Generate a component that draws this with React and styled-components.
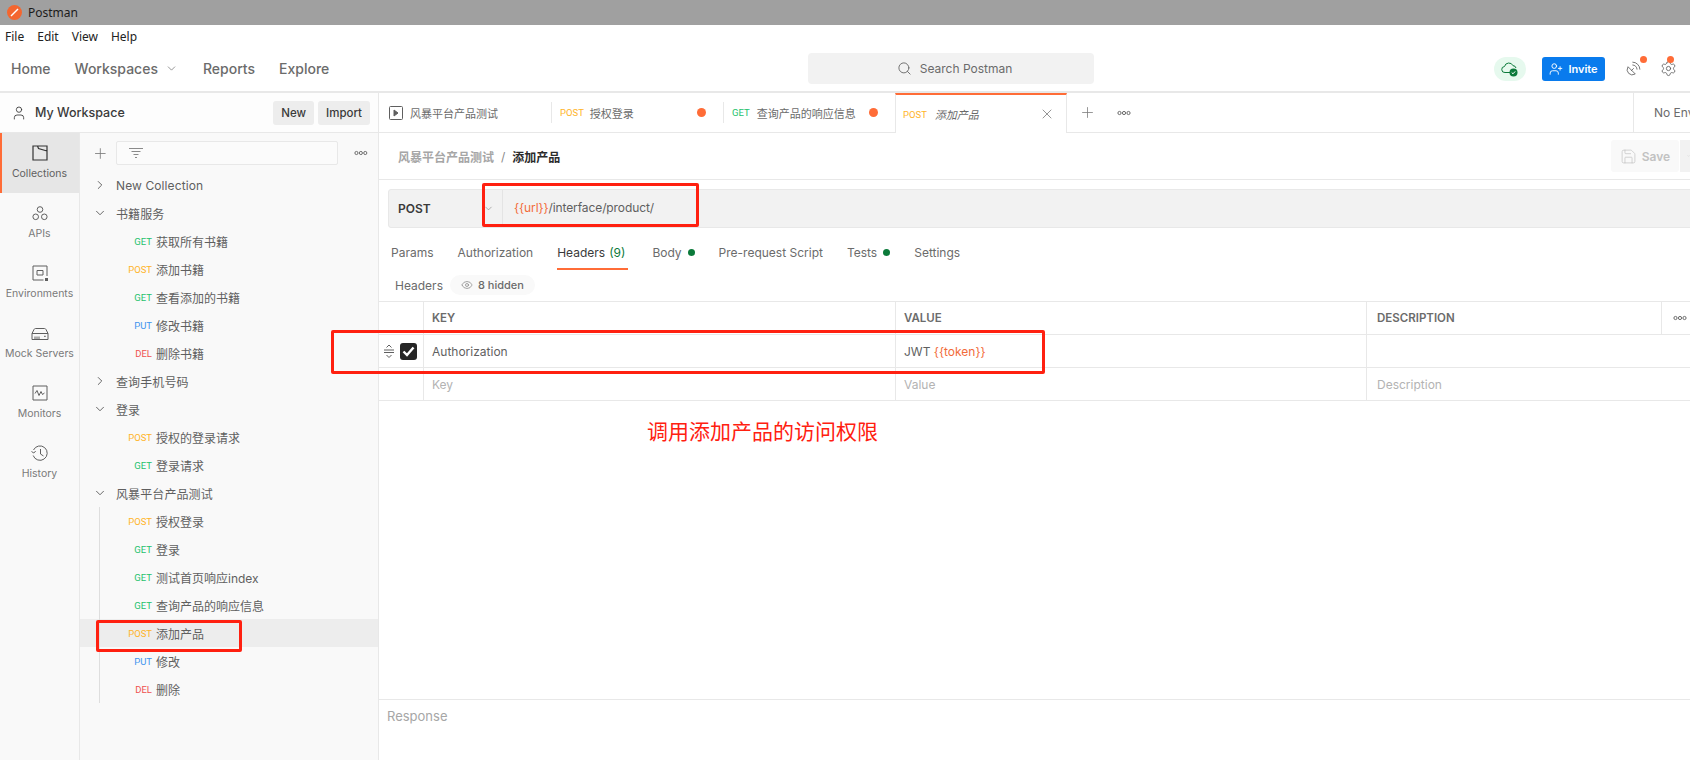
import React from "react";
import styled, { createGlobalStyle } from "styled-components";
import { ChevronDown, ChevronRight, Plus, X, Search, Eye, User, UserPlus, Settings, SatelliteDish, Save } from "lucide-react";

const GlobalStyle = createGlobalStyle`
  html, body { margin: 0; padding: 0; background: #fff; }
  * { box-sizing: border-box; }
  body {
    font-family: Inter, "Noto Sans CJK SC", sans-serif;
    font-size: 12px;
    color: #3a3a3a;
    overflow: hidden;
  }
`;

const methodColors = { GET: "#26c26d", POST: "#ffb428", PUT: "#3f94ee", DEL: "#ef5050" };

const tree = [
  { name: "New Collection" },
  {
    name: "书籍服务",
    open: true,
    items: [
      ["GET", "获取所有书籍"],
      ["POST", "添加书籍"],
      ["GET", "查看添加的书籍"],
      ["PUT", "修改书籍"],
      ["DEL", "删除书籍"],
    ],
  },
  { name: "查询手机号码" },
  {
    name: "登录",
    open: true,
    items: [
      ["POST", "授权的登录请求"],
      ["GET", "登录请求"],
    ],
  },
  {
    name: "风暴平台产品测试",
    open: true,
    guide: true,
    items: [
      ["POST", "授权登录"],
      ["GET", "登录"],
      ["GET", "测试首页响应index"],
      ["GET", "查询产品的响应信息"],
      ["POST", "添加产品", true],
      ["PUT", "修改"],
      ["DEL", "删除"],
    ],
  },
];

const MoreDots = () => (
  <svg width="14" height="6" viewBox="0 0 14 6" fill="none" stroke="#6b6b6b" strokeWidth="1">
    <circle cx="2.5" cy="3" r="1.6" />
    <circle cx="7" cy="3" r="1.6" />
    <circle cx="11.5" cy="3" r="1.6" />
  </svg>
);

const railItems = [
  {
    label: "Collections",
    icon: <path d="M4 4h14v14H4zM8.500 4l1 2.500L18 9" stroke="#333" strokeWidth="1.200" />,
  },
  {
    label: "APIs",
    icon: (
      <>
        <circle cx="11" cy="7.500" r="2.800" />
        <circle cx="6.700" cy="14.800" r="2.800" />
        <circle cx="15.300" cy="14.800" r="2.800" />
      </>
    ),
  },
  {
    label: "Environments",
    icon: (
      <>
        <path d="M18 14V4H4v14h10.500M8 8.500h6v4.500H8z" />
        <rect x="16" y="16" width="3" height="3" fill="#5f5f5f" stroke="none" />
      </>
    ),
  },
  {
    label: "Mock Servers",
    icon: <path d="M3 11.500V17.500h16v-6l-2-4q-.5-1-1.500-1h-9q-1 0-1.500 1zM3 11.500h16M6 14.500v3M8 14.500v3M10 14.500v3M15 14.300h1.800" />,
  },
  {
    label: "Monitors",
    icon: <path d="M4 4h14v14H4zM6 11.500l2-3 2 5 2-4 1.500 3 2-1.500" />,
  },
  {
    label: "History",
    icon: <path d="M4.500 8a7.200 7.200 0 1 1-.3 5.500M2.500 9.500l2.300 1.500 1.900-2M11.500 7v5l3 2" />,
  },
];

const App = () => {
  return (
    <Page>
      <GlobalStyle />
      <TitleBar>
        <Logo>
          <svg width="9" height="9" viewBox="0 0 9 9" fill="none" stroke="#fff" strokeWidth="1.500">
            <path d="M1 8l7-7" />
          </svg>
        </Logo>
        Postman
      </TitleBar>
      <MenuBar>
        <span>File</span>
        <span>Edit</span>
        <span>View</span>
        <span>Help</span>
      </MenuBar>
      <NavBar>
        <NavLeft>
          <NavLink>Home</NavLink>
          <NavLink>
            Workspaces <ChevronDown size={13} strokeWidth={1.3} />
          </NavLink>
          <NavLink>Reports</NavLink>
          <NavLink>Explore</NavLink>
        </NavLeft>
        <SearchBox>
          <Search size={15} strokeWidth={1.5} color="#6b6b6b" />
          Search Postman
        </SearchBox>
        <NavRight>
          <CloudPill>
            <svg width="18" height="16" viewBox="0 0 18 16" fill="none">
              <path d="M10 11.500H4a3 3 0 0 1-.5-6 4.500 4.500 0 0 1 8.500-.8 3 3 0 0 1 3 2.300" stroke="#0b7a3a" strokeWidth="1" />
              <circle cx="12.500" cy="11.500" r="4" fill="#0b7a3a" />
              <path d="M10.700 11.500l1.300 1.300 2.200-2.400" stroke="#fff" strokeWidth="1" />
            </svg>
          </CloudPill>
          <InviteButton>
            <UserPlus size={14} strokeWidth={1.6} />
            Invite
          </InviteButton>
          <IconBadge $gap="20px">
            <SatelliteDish size={17} strokeWidth={1.2} color="#5f5f5f" />
            <BadgeDot $right="-5px" />
          </IconBadge>
          <IconBadge $gap="18px">
            <Settings size={17} strokeWidth={1.2} color="#5f5f5f" />
            <BadgeDot $right="3px" />
          </IconBadge>
        </NavRight>
      </NavBar>
      <Body>
        <Sidebar>
          <WorkspaceBar>
            <User size={16} strokeWidth={1.3} color="#3a3a3a" />
            <WorkspaceName>My Workspace</WorkspaceName>
            <SmallButton>New</SmallButton>
            <SmallButton>Import</SmallButton>
          </WorkspaceBar>
          <SidebarBody>
            <Rail>
              {railItems.map((item) => (
                <RailItem key={item.label} $active={item.label === "Collections"}>
                  <svg width="22" height="22" viewBox="0 0 22 22" fill="none" stroke="#5f5f5f" strokeWidth="1">
                    {item.icon}
                  </svg>
                  <span>{item.label}</span>
                </RailItem>
              ))}
            </Rail>
            <TreePanel>
              <TreeTools>
                <Plus size={17} strokeWidth={1.2} color="#7a7a7a" />
                <FilterInput>
                  <svg width="16" height="12" viewBox="0 0 16 12" fill="none" stroke="#8a8a8a" strokeWidth="1">
                    <path d="M1 1.500h14M3.500 4.500h9M5.500 7.500h5M7 10.500h2" />
                  </svg>
                </FilterInput>
                <MoreDots />
              </TreeTools>
              {tree.map((folder) => (
                <div key={folder.name}>
                  <FolderRow>
                    {folder.open ? (
                      <ChevronDown size={14} strokeWidth={1.3} />
                    ) : (
                      <ChevronRight size={14} strokeWidth={1.3} />
                    )}
                    <span>{folder.name}</span>
                  </FolderRow>
                  {folder.items && (
                    <Children $guide={folder.guide}>
                      {folder.items.map(([type, name, selected]) => (
                        <RequestRow key={name} $selected={selected}>
                          <MethodLabel $type={type}>{type}</MethodLabel>
                          <span>{name}</span>
                        </RequestRow>
                      ))}
                    </Children>
                  )}
                </div>
              ))}
            </TreePanel>
          </SidebarBody>
        </Sidebar>
        <Main>
          <TabStrip>
            <Tab>
              <svg width="14" height="14" viewBox="0 0 14 14" fill="none" stroke="#5f5f5f" strokeWidth="1">
                <rect x="0.500" y="0.500" width="13" height="13" rx="1" />
                <path d="M5 4l4 3-4 3z" fill="#5f5f5f" />
              </svg>
              <TabLabel>风暴平台产品测试</TabLabel>
            </Tab>
            <Tab $sep>
              <MethodLabel $type="POST">POST</MethodLabel>
              <TabLabel $gap="6px">授权登录</TabLabel>
              <UnsavedDot />
            </Tab>
            <Tab $sep>
              <MethodLabel $type="GET">GET</MethodLabel>
              <TabLabel>查询产品的响应信息</TabLabel>
              <UnsavedDot />
            </Tab>
            <Tab $active>
              <MethodLabel $type="POST">POST</MethodLabel>
              <TabLabel $gap="8px" $italic>添加产品</TabLabel>
              <TabClose>
                <X size={16} strokeWidth={1} color="#5f5f5f" />
              </TabClose>
            </Tab>
            <TabTool>
              <Plus size={17} strokeWidth={1.1} color="#7a7a7a" />
              <MoreDots />
            </TabTool>
            <EnvCell>No Environment</EnvCell>
          </TabStrip>
          <Crumbs>
            <CrumbParent>风暴平台产品测试</CrumbParent>
            <CrumbSlash>/</CrumbSlash>
            <CrumbCurrent>添加产品</CrumbCurrent>
            <SaveGroup>
              <SaveButton>
                <Save size={17} strokeWidth={1} />
                Save
              </SaveButton>
              <SaveArrow>
                <ChevronDown size={12} strokeWidth={1.3} />
              </SaveArrow>
            </SaveGroup>
          </Crumbs>
          <UrlSection>
            <UrlBar>
              <MethodSelect>
                POST
                <ChevronDown size={11} strokeWidth={1} color="#5f5f5f" />
              </MethodSelect>
              <UrlText>
                <Variable>{"{{url}}"}</Variable>/interface/product/
              </UrlText>
            </UrlBar>
          </UrlSection>
          <RequestTabs>
            <RequestTab>Params</RequestTab>
            <RequestTab>Authorization</RequestTab>
            <RequestTab $active>
              Headers <Count>(9)</Count>
            </RequestTab>
            <RequestTab>
              Body <GreenDot />
            </RequestTab>
            <RequestTab>Pre-request Script</RequestTab>
            <RequestTab>
              Tests <GreenDot />
            </RequestTab>
            <RequestTab>Settings</RequestTab>
          </RequestTabs>
          <HeadersRow>
            <span>Headers</span>
            <HiddenPill>
              <Eye size={12} strokeWidth={1.500} color="#8a8a8a" />8 hidden
            </HiddenPill>
          </HeadersRow>
          <Table>
            <TableRow>
              <DragCell />
              <HeadCell>KEY</HeadCell>
              <HeadCell>VALUE</HeadCell>
              <HeadCell>DESCRIPTION</HeadCell>
              <EndCell>
                <MoreDots />
              </EndCell>
            </TableRow>
            <TableRow>
              <DragCell>
                <svg width="12" height="14" viewBox="0 0 12 14" fill="none" stroke="#5f5f5f" strokeWidth="1">
                  <path d="M1 6h10M1 8.500h10M3.500 3.500L6 1l2.500 2.500M3.500 11L6 13.500 8.500 11" />
                </svg>
                <Checkbox>
                  <svg width="13" height="11" viewBox="0 0 13 11" fill="none" stroke="#fff" strokeWidth="2.400">
                    <path d="M1.500 5.500l3.500 3.500 6.500-7.500" />
                  </svg>
                </Checkbox>
              </DragCell>
              <Cell>Authorization</Cell>
              <Cell>
                JWT&nbsp;<Variable>{"{{token}}"}</Variable>
              </Cell>
              <Cell />
              <EndCell />
            </TableRow>
            <TableRow>
              <DragCell />
              <Cell $muted>Key</Cell>
              <Cell $muted>Value</Cell>
              <Cell $muted>Description</Cell>
              <EndCell />
            </TableRow>
          </Table>
          <Spacer />
          <ResponseBar>Response</ResponseBar>
        </Main>
      </Body>
      <Annotation $left="482px" $top="183px" $width="217px" $height="44px" />
      <Annotation $left="331px" $top="330px" $width="714px" $height="44px" />
      <Annotation $left="96px" $top="620px" $width="146px" $height="32px" />
      <AnnotationText>调用添加产品的访问权限</AnnotationText>
    </Page>
  );
};

const Page = styled.div`
  position: relative;
  width: 1690px;
  height: 760px;
  overflow: hidden;
  display: flex;
  flex-direction: column;
  background: #fff;
`;

const TitleBar = styled.div`
  height: 25px;
  flex: none;
  background: #a0a0a0;
  color: #1c1c1c;
  font-family: "Noto Sans", sans-serif;
  font-size: 12px;
  display: flex;
  align-items: center;
  gap: 6px;
  padding-left: 7px;
`;

const Logo = styled.div`
  width: 15px;
  height: 15px;
  border-radius: 50%;
  background: #f4662f;
  display: flex;
  align-items: center;
  justify-content: center;
`;

const MenuBar = styled.div`
  height: 22px;
  flex: none;
  display: flex;
  align-items: center;
  gap: 13px;
  padding-left: 5px;
  font-family: "Noto Sans", sans-serif;
  font-size: 12px;
  color: #222;
`;

const NavBar = styled.div`
  height: 46px;
  flex: none;
  display: grid;
  grid-template-columns: 808px 286px 1fr;
  align-items: center;
  padding-bottom: 1px;
  border-bottom: 2px solid #e8e8e8;
`;

const NavLeft = styled.div`
  display: flex;
  align-items: center;
  gap: 22px;
  padding-left: 11px;
`;

const NavLink = styled.div`
  display: flex;
  align-items: center;
  gap: 7px;
  font-size: 14px;
  font-weight: 500;
  color: #6b6b6b;
  &:nth-child(1) { margin-right: 2px; }
  &:nth-child(2) { margin-right: 3px; }
  &:nth-child(3) { margin-right: 2px; }
`;

const SearchBox = styled.div`
  height: 31px;
  background: #f2f2f2;
  border-radius: 4px;
  display: flex;
  align-items: center;
  justify-content: center;
  padding-left: 7px;
  gap: 8px;
  color: #6b6b6b;
  font-size: 12px;
`;

const NavRight = styled.div`
  display: flex;
  align-items: center;
  justify-content: flex-end;
  padding-right: 13px;
`;

const CloudPill = styled.div`
  width: 32px;
  height: 24px;
  border-radius: 12px;
  background: #e6f9ee;
  display: flex;
  align-items: center;
  justify-content: center;
  margin-right: 16px;
`;

const InviteButton = styled.div`
  width: 63px;
  height: 24px;
  border-radius: 3px;
  background: #097bed;
  color: #fff;
  font-weight: 600;
  font-size: 11px;
  display: flex;
  align-items: center;
  justify-content: center;
  gap: 5px;
`;

const IconBadge = styled.div`
  position: relative;
  display: flex;
  margin-left: ${(p) => p.$gap};
`;

const BadgeDot = styled.span`
  position: absolute;
  top: -4px;
  right: ${(p) => p.$right};
  width: 7px;
  height: 7px;
  border-radius: 50%;
  background: #ff6c37;
`;

const Body = styled.div`
  flex: 1;
  display: flex;
  min-height: 0;
`;

const Sidebar = styled.div`
  width: 379px;
  flex: none;
  display: flex;
  flex-direction: column;
  border-right: 1px solid #e8e8e8;
`;

const WorkspaceBar = styled.div`
  height: 40px;
  flex: none;
  display: flex;
  align-items: center;
  padding: 0 8px 0 11px;
  gap: 4px;
  border-bottom: 1px solid #e8e8e8;
  background: #fdfdfd;
`;

const WorkspaceName = styled.div`
  flex: 1;
  margin-left: 4px;
  font-size: 12.500px;
  font-weight: 500;
  color: #3a3a3a;
`;

const SmallButton = styled.div`
  height: 24px;
  padding: 0 8px;
  border-radius: 3px;
  background: #ededed;
  font-size: 11.500px;
  font-weight: 500;
  color: #3a3a3a;
  display: flex;
  align-items: center;
`;

const SidebarBody = styled.div`
  flex: 1;
  display: flex;
  min-height: 0;
`;

const Rail = styled.div`
  width: 80px;
  flex: none;
  background: #f9f9f9;
  border-right: 1px solid #e8e8e8;
`;

const RailItem = styled.div`
  height: 60px;
  display: flex;
  flex-direction: column;
  align-items: center;
  padding: 9px 2px 0 0;
  gap: 3px;
  font-size: 10.500px;
  color: ${(p) => (p.$active ? "#5f5f5f" : "#7a7a7a")};
  background: ${(p) => (p.$active ? "#e6e6e6" : "transparent")};
  border-left: 2px solid ${(p) => (p.$active ? "#ff6c37" : "transparent")};
`;

const TreePanel = styled.div`
  flex: 1;
  min-width: 0;
  background: #f9f9f9;
`;

const TreeTools = styled.div`
  height: 40px;
  margin-bottom: -2px;
  display: flex;
  align-items: center;
  padding: 0 10px 0 12px;
  gap: 7px;
`;

const FilterInput = styled.div`
  width: 227px;
  height: 24px;
  background: #fbfbfb;
  border: 1px solid #e8e8e8;
  border-radius: 2px;
  display: flex;
  align-items: center;
  padding-left: 11px;
  margin-right: 9px;
`;

const FolderRow = styled.div`
  height: 28px;
  display: flex;
  align-items: center;
  padding-left: 13px;
  gap: 9px;
  color: #5f5f5f;
  font-size: 12px;
  letter-spacing: 0.1px;
  svg { color: #3a3a3a; flex: none; }
`;

const Children = styled.div`
  position: relative;
  ${(p) =>
    p.$guide &&
    `&::before {
      content: "";
      position: absolute;
      left: 19px;
      top: 0;
      bottom: 0;
      width: 1px;
      background: #dedede;
      z-index: 1;
    }`}
`;

const RequestRow = styled.div`
  height: 28px;
  display: grid;
  grid-template-columns: 72px 1fr;
  column-gap: 4px;
  align-items: center;
  background: ${(p) => (p.$selected ? "#ededed" : "transparent")};
  color: #5f5f5f;
  font-size: 12px;
`;

const MethodLabel = styled.span`
  font-family: Roboto, sans-serif;
  font-size: 9.500px;
  color: ${(p) => methodColors[p.$type]};
  text-align: right;
`;

const Main = styled.div`
  flex: 1;
  min-width: 0;
  display: flex;
  flex-direction: column;
`;

const TabStrip = styled.div`
  height: 40px;
  flex: none;
  display: flex;
  border-bottom: 1px solid #e8e8e8;
`;

const Tab = styled.div`
  position: relative;
  width: 172px;
  flex: none;
  height: ${(p) => (p.$active ? "40px" : "39px")};
  display: flex;
  align-items: center;
  padding-left: ${(p) => (p.$active ? "7px" : p.$sep ? "9px" : "10px")};
  background: #fff;
  border-top: ${(p) => (p.$active ? "2px solid #ff6c37" : "none")};
  border-right: ${(p) => (p.$active ? "1px solid #e8e8e8" : "none")};
  border-left: ${(p) => (p.$active ? "1px solid #e8e8e8" : "none")};
  color: #5f5f5f;
  ${(p) =>
    p.$sep &&
    `&::before {
      content: "";
      position: absolute;
      left: 0;
      top: 9px;
      height: 21px;
      width: 1px;
      background: #e8e8e8;
    }`}
`;

const TabLabel = styled.span`
  margin-left: ${(p) => p.$gap || "7px"};
  font-size: 11px;
  font-style: ${(p) => (p.$italic ? "italic" : "normal")};
  color: #6b6b6b;
`;

const UnsavedDot = styled.span`
  position: absolute;
  right: 17px;
  top: 15px;
  width: 9px;
  height: 9px;
  border-radius: 50%;
  background: #ff6c37;
`;

const TabClose = styled.span`
  margin-left: auto;
  margin-right: 11px;
  display: flex;
`;

const TabTool = styled.div`
  display: flex;
  align-items: center;
  gap: 21px;
  padding-left: 12px;
  flex: 1;
`;

const EnvCell = styled.div`
  width: 57px;
  flex: none;
  border-left: 1px solid #e8e8e8;
  padding-left: 20px;
  display: flex;
  align-items: center;
  white-space: nowrap;
  overflow: hidden;
  color: #6b6b6b;
`;

const Crumbs = styled.div`
  height: 47px;
  flex: none;
  display: flex;
  align-items: center;
  padding-left: 19px;
  border-bottom: 1px solid #e8e8e8;
`;

const CrumbParent = styled.span`
  font-weight: 600;
  color: #a6a6a6;
`;

const CrumbSlash = styled.span`
  margin: 0 7px;
  color: #8a8a8a;
`;

const CrumbCurrent = styled.span`
  font-weight: 600;
  color: #2b2b2b;
`;

const SaveGroup = styled.div`
  margin-left: auto;
  display: flex;
  gap: 1px;
`;

const SaveButton = styled.div`
  width: 68px;
  height: 32px;
  border-radius: 3px;
  background: #f9f9f9;
  color: #c2c2c2;
  font-weight: 600;
  display: flex;
  align-items: center;
  justify-content: center;
  gap: 5px;
`;

const SaveArrow = styled.div`
  width: 10px;
  height: 32px;
  background: #f2f2f2;
  color: #8a8a8a;
  display: flex;
  align-items: center;
  overflow: hidden;
  padding-left: 7px;
`;

const UrlSection = styled.div`
  height: 48px;
  flex: none;
  padding: 9px 0 0 9px;
`;

const UrlBar = styled.div`
  height: 39px;
  margin-right: -4px;
  display: flex;
  background: #f2f2f2;
  border: 1px solid #e8e8e8;
  border-radius: 3px;
`;

const MethodSelect = styled.div`
  width: 114px;
  flex: none;
  display: flex;
  align-items: center;
  justify-content: space-between;
  padding: 0 8px 0 9px;
  border-right: 1px solid #e4e4e4;
  font-size: 12px;
  font-weight: 600;
  color: #3a3a3a;
`;

const UrlText = styled.div`
  flex: 1;
  padding-left: 11px;
  padding-bottom: 2px;
  display: flex;
  align-items: center;
  color: #5f5f5f;
  font-size: 12px;
  letter-spacing: -0.1px;
`;

const Variable = styled.span`
  color: #f26b3a;
`;

const RequestTabs = styled.div`
  height: 42px;
  flex: none;
  display: flex;
  padding-left: 12px;
  gap: 24px;
`;

const RequestTab = styled.div`
  height: 42px;
  padding-top: 8px;
  padding-right: ${(p) => (p.$active ? "3px" : "0")};
  display: flex;
  align-items: center;
  gap: 4px;
  color: ${(p) => (p.$active ? "#3a3a3a" : "#6b6b6b")};
  border-bottom: 2px solid ${(p) => (p.$active ? "#ff6c37" : "transparent")};
`;

const Count = styled.span`
  color: #0b7a3a;
`;

const GreenDot = styled.span`
  width: 7px;
  height: 7px;
  border-radius: 50%;
  background: #0b7a3a;
  margin-left: 2px;
`;

const HeadersRow = styled.div`
  height: 31px;
  flex: none;
  display: flex;
  align-items: center;
  padding: 0 0 1px 16px;
  gap: 7px;
  color: #6b6b6b;
`;

const HiddenPill = styled.div`
  width: 85px;
  height: 20px;
  border-radius: 10px;
  background: #f9f9f9;
  display: flex;
  align-items: center;
  justify-content: center;
  gap: 5px;
  font-size: 11px;
  font-weight: 500;
  color: #6b6b6b;
`;

const Table = styled.div`
  border-top: 1px solid #e8e8e8;
  flex: none;
`;

const TableRow = styled.div`
  display: grid;
  grid-template-columns: 45px 472px 471px 295px 28px;
  height: 33px;
  border-bottom: 1px solid #e8e8e8;
`;

const DragCell = styled.div`
  display: flex;
  align-items: center;
  padding-left: 4px;
  gap: 5px;
  border-right: 1px solid #e8e8e8;
`;

const Checkbox = styled.div`
  width: 17px;
  height: 17px;
  border-radius: 3px;
  background: #262626;
  display: flex;
  align-items: center;
  justify-content: center;
`;

const HeadCell = styled.div`
  display: flex;
  align-items: center;
  padding-left: 8px;
  border-right: 1px solid #e8e8e8;
  font-weight: 600;
  font-size: 11.500px;
  color: #6b6b6b;
  &:nth-child(4) { padding-left: 10px; }
`;

const Cell = styled.div`
  display: flex;
  align-items: center;
  padding-left: 8px;
  border-right: 1px solid #e8e8e8;
  color: ${(p) => (p.$muted ? "#b3b3b3" : "#5f5f5f")};
  font-size: 12px;
  &:nth-child(4) { border-right: none; padding-left: 10px; }
`;

const EndCell = styled.div`
  display: flex;
  align-items: center;
  padding-left: 11px;
`;

const Spacer = styled.div`
  flex: 1;
`;

const ResponseBar = styled.div`
  height: 61px;
  flex: none;
  border-top: 1px solid #e8e8e8;
  padding: 8px 0 0 8px;
  color: #a6a6a6;
  font-size: 13px;
`;

const Annotation = styled.div`
  position: absolute;
  left: ${(p) => p.$left};
  top: ${(p) => p.$top};
  width: ${(p) => p.$width};
  height: ${(p) => p.$height};
  border: 3px solid #ff2010;
  border-radius: 2px;
  z-index: 3;
`;

const AnnotationText = styled.div`
  position: absolute;
  left: 647px;
  top: 416px;
  font-size: 21px;
  line-height: 28px;
  color: #ff2010;
  font-family: "Noto Sans CJK SC", sans-serif;
  z-index: 3;
`;

export default App;
